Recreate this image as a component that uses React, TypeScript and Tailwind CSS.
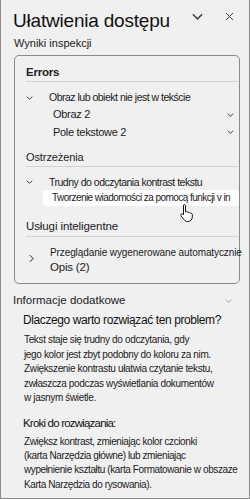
import React from 'react';

const font = { fontFamily: '"Liberation Sans", Arial, sans-serif' };

const ChevronDown = ({ className = '' }: { className?: string }) => (
  <svg viewBox="0 0 10 6" className={className} fill="none" stroke="currentColor" strokeWidth="1.3">
    <path d="M1 1l4 4 4-4" />
  </svg>
);

const ChevronRight = ({ className = '' }: { className?: string }) => (
  <svg viewBox="0 0 6 10" className={className} fill="none" stroke="currentColor" strokeWidth="1.2">
    <path d="M1 1l4 4-4 4" />
  </svg>
);

const Cursor = () => (
  <svg viewBox="0 0 16 20" className="absolute left-[179px] top-[203px] w-[16px] h-[20px]">
    <path
      d="M4 1.5c.8 0 1.5.6 1.5 1.4v6l.6-.3c.7-.3 1.4 0 1.7.6l.2.4.4-.2c.7-.3 1.4 0 1.7.6l.2.4.4-.1c.8-.2 1.6.4 1.6 1.2v2.5c0 2.6-2 4.6-4.6 4.6H7.4c-1.4 0-2.6-.7-3.3-1.9L1 13c-.4-.7-.2-1.5.5-1.9.6-.3 1.3-.2 1.7.3l.3.4V2.9c0-.8.3-1.4.5-1.4z"
      fill="#fff"
      stroke="#111"
      strokeWidth="1"
    />
  </svg>
);

export default function App() {
  return (
    <div
      style={font}
      className="relative w-[250px] h-[499px] bg-[#f0f0f0] border-x border-b border-[#8a8a8a] overflow-hidden text-[#1b1b1b] whitespace-nowrap"
    >
      {/* Header */}
      <div className="h-[34px] flex items-center pl-[12px] pt-[7px]">
        <h1 className="text-[19px] leading-none tracking-[-0.2px] text-[#111] flex-1">Ułatwienia dostępu</h1>
        <ChevronDown className="w-[13px] h-[7px] text-[#444] mr-[21px] -mt-[8px]" />
        <svg viewBox="0 0 10 10" className="w-[9px] h-[9px] text-[#444] mr-[15px] -mt-[8px]" fill="none" stroke="currentColor" strokeWidth="1.1">
          <path d="M1 1l8 8M9 1l-8 8" />
        </svg>
      </div>
      <div className="pl-[13px] h-[19px] text-[11px] leading-none tracking-[0px] flex items-center text-[#222]">
        Wyniki inspekcji
      </div>

      {/* Results box */}
      <div className="ml-[13px] w-[226px] mt-[2px] h-[229px] border border-[#8a8a8a] rounded-[5px]">
        <div className="mx-[11px] mr-[1px] h-[26px] flex items-center pt-[8px] border-b border-[#d2d2d2]">
          <span className="text-[11.5px] leading-none font-bold tracking-[-0.2px] text-[#222]">Errors</span>
        </div>
        <div className="h-[25px] flex items-center pl-[11px] pt-[6px]">
          <ChevronDown className="w-[7px] h-[4px] text-[#222] mr-[16px]" />
          <span className="text-[10.5px] leading-none tracking-[-0.5px]">Obraz lub obiekt nie jest w tekście</span>
        </div>
        <div className="h-[15px] flex items-center pl-[38px] pr-[5px]">
          <span className="flex-1 text-[11px] leading-none tracking-[-0.3px]">Obraz 2</span>
          <ChevronDown className="w-[7px] h-[4px] text-[#222]" />
        </div>
        <div className="h-[20px] flex items-center pl-[38px] pr-[5px]">
          <span className="flex-1 text-[11px] leading-none tracking-[-0.3px]">Pole tekstowe 2</span>
          <ChevronDown className="w-[7px] h-[4px] text-[#222]" />
        </div>
        <div className="mx-[11px] mr-[1px] h-[25px] flex items-center pt-[6px] border-b border-[#d2d2d2]">
          <span className="text-[11px] leading-none tracking-[-0.1px]">Ostrzeżenia</span>
        </div>
        <div className="h-[22px] flex items-center pl-[11px] pt-[8px]">
          <ChevronDown className="w-[7px] h-[4px] text-[#222] mr-[16px]" />
          <span className="text-[10.5px] leading-none tracking-[-0.5px]">Trudny do odczytania kontrast tekstu</span>
        </div>
        <div className="ml-[28px] mt-[1px] h-[16px] bg-white rounded-[2px] flex items-center pl-[9px] overflow-hidden">
          <span className="text-[10px] leading-none tracking-[-0.55px]">Tworzenie wiadomości za pomocą funkcji v in</span>
        </div>
        <div className="mx-[11px] mr-[1px] h-[31px] flex items-center pt-[12px] border-b border-[#d2d2d2]">
          <span className="text-[11.5px] leading-none tracking-[-0.1px]">Usługi inteligentne</span>
        </div>
        <div className="flex items-start pl-[14px] pt-[8px]">
          <ChevronRight className="w-[5px] h-[9px] text-[#222] mr-[16px] mt-[9px] shrink-0" />
          <div className="flex flex-col">
            <span className="text-[10px] leading-[15px] tracking-[-0.1px]">Przeglądanie wygenerowane automatycznie</span>
            <span className="text-[11.5px] leading-[15px] tracking-[-0.2px]">Opis (2)</span>
          </div>
        </div>
      </div>

      {/* Additional info */}
      <div className="h-[28px] flex items-center pl-[12px] pr-[17px] pt-[6px]">
        <span className="flex-1 text-[11.5px] leading-none tracking-[0px]">Informacje dodatkowe</span>
        <ChevronDown className="w-[7px] h-[4px] text-[#9a9a9a]" />
      </div>
      <div className="pl-[22px]">
        <p className="text-[12px] leading-[16px] tracking-[-0.4px] text-[#111]">Dlaczego warto rozwiązać ten problem?</p>
        <p className="mt-[5px] pl-[1px] text-[10px] leading-[14.5px] tracking-[-0.35px]">
          Tekst staje się trudny do odczytania, gdy
          <br />
          jego kolor jest zbyt podobny do koloru za nim.
          <br />
          Zwiększenie kontrastu ułatwia czytanie tekstu,
          <br />
          zwłaszcza podczas wyświetlania dokumentów
          <br />
          w jasnym świetle.
        </p>
        <p className="mt-[9px] text-[11.5px] leading-[16px] tracking-[-0.8px] text-[#111]">Kroki do rozwiązania:</p>
        <p className="mt-[4px] pl-[1px] text-[10px] leading-[14.4px] tracking-[-0.4px]">
          Zwiększ kontrast, zmieniając kolor czcionki
          <br />
          (karta Narzędzia główne) lub zmieniając
          <br />
          wypełnienie kształtu (karta Formatowanie w obszaze
          <br />
          Karta Narzędzia do rysowania).
        </p>
      </div>

      <Cursor />
    </div>
  );
}
